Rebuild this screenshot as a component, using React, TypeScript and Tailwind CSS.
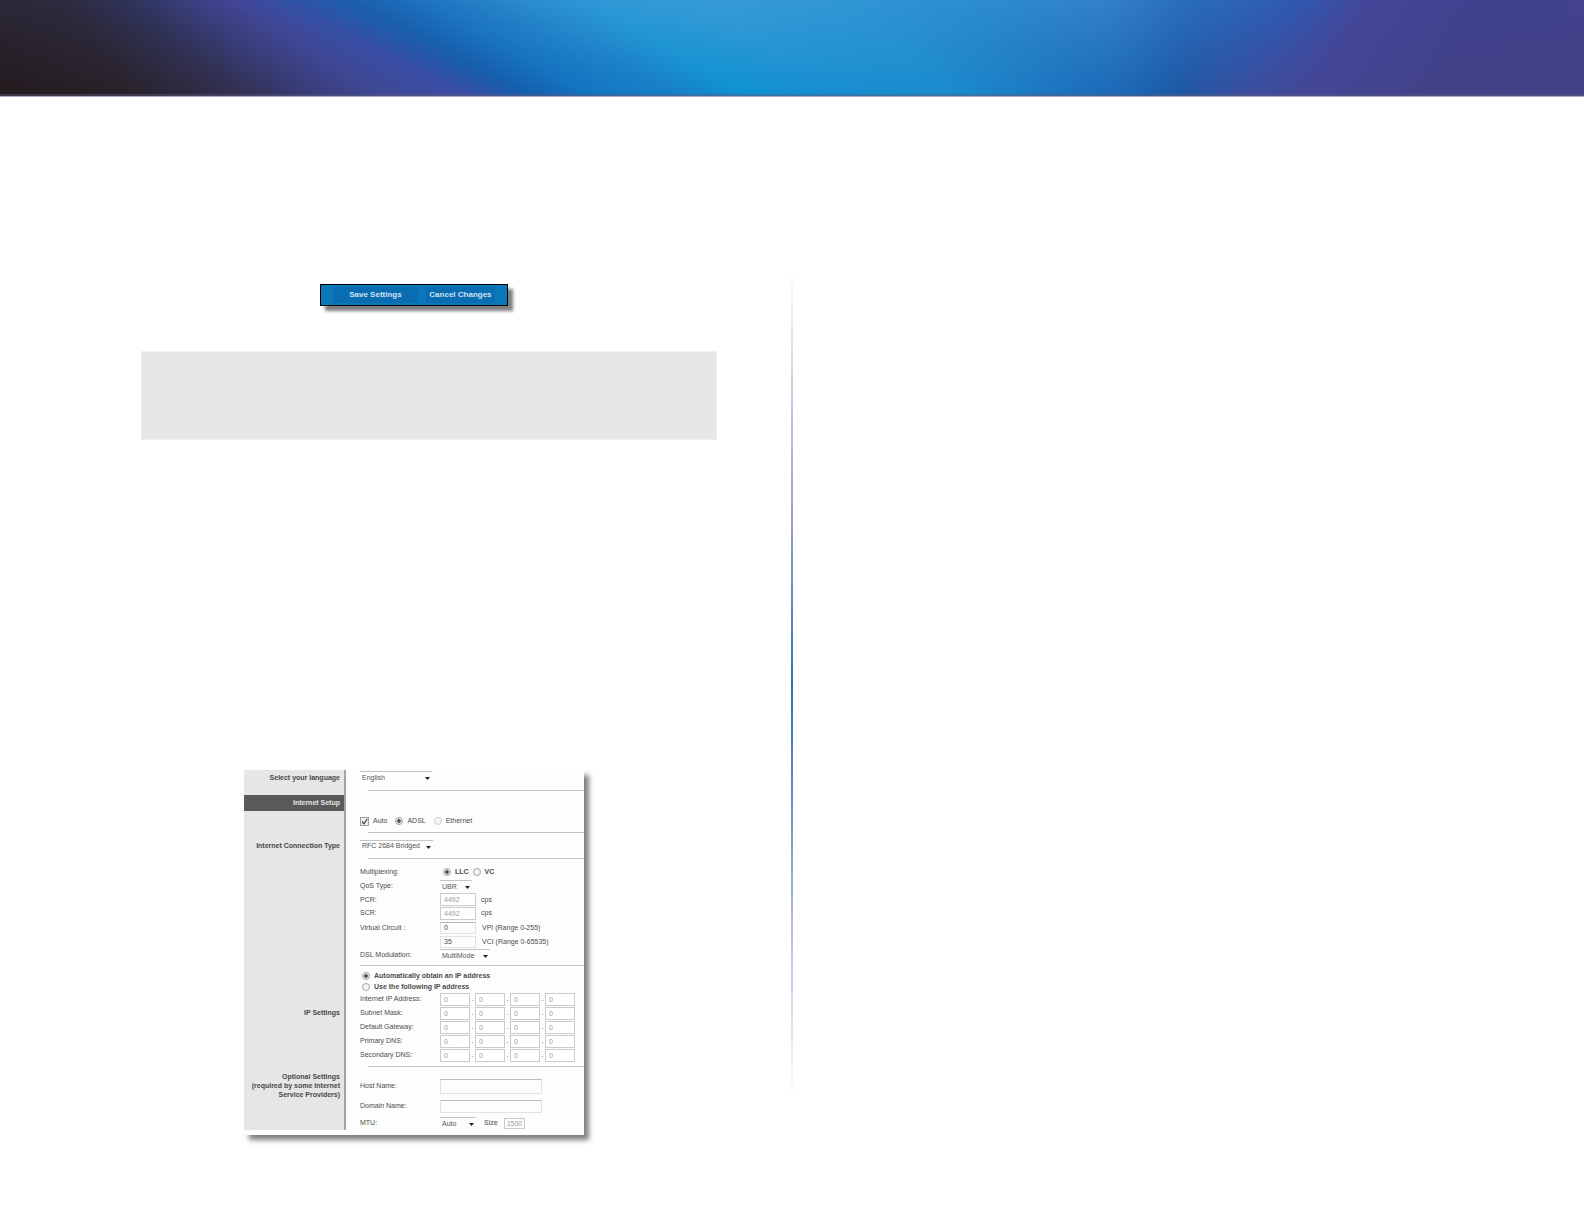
import type { ReactNode } from "react";

// Colour stops of the banner: [x at top, x at bottom, colour at top, colour at bottom]
const bannerStops: [number, number, number[], number[]][] = [
  [0, 0, [43, 40, 56], [36, 26, 30]],
  [60, 130, [46, 42, 62], [40, 34, 42]],
  [130, 230, [46, 52, 90], [50, 46, 76]],
  [185, 310, [58, 62, 124], [56, 60, 118]],
  [235, 380, [66, 70, 150], [62, 72, 148]],
  [290, 460, [48, 82, 166], [60, 76, 164]],
  [350, 530, [26, 94, 172], [22, 94, 172]],
  [420, 590, [30, 114, 190], [18, 116, 192]],
  [520, 680, [42, 138, 204], [22, 128, 200]],
  [590, 750, [46, 152, 214], [14, 146, 208]],
  [700, 830, [54, 156, 214], [22, 142, 208]],
  [850, 960, [48, 150, 212], [24, 138, 204]],
  [980, 1040, [44, 140, 208], [28, 120, 192]],
  [1100, 1120, [50, 130, 200], [26, 104, 182]],
  [1190, 1180, [42, 108, 186], [30, 88, 164]],
  [1300, 1240, [48, 88, 176], [58, 78, 158]],
  [1370, 1310, [68, 70, 152], [68, 70, 150]],
  [1480, 1430, [64, 66, 142], [66, 66, 136]],
  [1584, 1584, [66, 66, 142], [66, 66, 134]],
];

const BANNER_ROWS = 48;
const mix = (a: number, b: number, t: number) => a + (b - a) * t;

function Banner() {
  const rows = Array.from({ length: BANNER_ROWS }, (_, i) => i / (BANNER_ROWS - 1));
  return (
    <header className="border-b border-[#a3a8c8]">
      <svg viewBox="0 0 1584 96" preserveAspectRatio="none" shapeRendering="crispEdges" className="block h-24 w-full" aria-hidden="true">
        <defs>
          {rows.map((t, i) => (
            <linearGradient key={i} id={`band${i}`}>
              {bannerStops.map(([x1, x2, c1, c2], k) => (
                <stop
                  key={k}
                  offset={mix(x1, x2, t) / 1584}
                  stopColor={`rgb(${c1.map((c, n) => Math.round(mix(c, c2[n], t))).join(",")})`}
                />
              ))}
            </linearGradient>
          ))}
        </defs>
        {rows.map((_, i) => (
          <rect key={i} x="0" y={i * 2} width="1584" height="2" fill={`url(#band${i})`} />
        ))}
        <rect x="0" y="94" width="1584" height="2" fill="#5a5a7c" opacity="0.45" />
      </svg>
    </header>
  );
}

type SectionProps = {
  label: ReactNode;
  labelClass?: string;
  className?: string;
  children: ReactNode;
};

function Section({ label, labelClass = "", className = "", children }: SectionProps) {
  return (
    <section className="grid grid-cols-[102px_1fr]">
      <div className={`border-r-2 border-[#a4a4a4] bg-[#e6e6e6] text-right font-bold leading-[9px] text-[#484848] ${labelClass}`}>{label}</div>
      <div className={`pl-[14px] ${className}`}>{children}</div>
    </section>
  );
}

function Rule({ wide = false }: { wide?: boolean }) {
  return <hr className={`border-[#c2c2c4] ${wide ? "" : "ml-2"}`} />;
}

type DropdownProps = { label: string; value: string; width: string; id?: string };

function Dropdown({ label, value, width, id }: DropdownProps) {
  return (
    <span className={`relative inline-block ${width}`}>
      <select
        id={id}
        aria-label={label}
        className="block h-3 w-full appearance-none border-t border-[#c4c4c4] bg-transparent pl-[2px] text-[#555]"
      >
        <option>{value}</option>
      </select>
      <svg viewBox="0 0 5 3" className="pointer-events-none absolute right-[2px] top-[6px] h-[3px] w-[5px]" aria-hidden="true">
        <path d="M0 0h5L2.5 3z" fill="#222" />
      </svg>
    </span>
  );
}

type ChoiceProps = { label: string; name: string; checked?: boolean; faint?: boolean };

function Choice({ label, name, checked, faint }: ChoiceProps) {
  return (
    <label className="flex items-center gap-1">
      <input
        type="radio"
        name={name}
        defaultChecked={checked}
        className={`size-2 shrink-0 appearance-none rounded-full border bg-[radial-gradient(circle,#f4f4f4_60%,#ddd)] checked:bg-[radial-gradient(circle,#505050_35%,#e4e4e4_50%)] ${faint ? "border-[#d0d0d0]" : "border-[#a4a4a4]"}`}
      />
      {label}
    </label>
  );
}

type RowProps = { label: string; id?: string; height?: string; children: ReactNode };

function Row({ label, id, height = "h-[14px]", children }: RowProps) {
  return (
    <div className={`flex items-center ${height}`}>
      <label htmlFor={id} className="w-20 shrink-0">
        {label}
      </label>
      {children}
    </div>
  );
}

const inputClass = "h-[13px] border border-[#cacaca] bg-white px-[3px] text-[#9a9a9a]";

const addresses = ["Internet IP Address:", "Subnet Mask:", "Default Gateway:", "Primary DNS:", "Secondary DNS:"];

function AddressInputs({ label }: { label: string }) {
  return (
    <div className="flex items-center">
      {[0, 1, 2, 3].map((n) => (
        <span key={n} className="flex items-center">
          {n > 0 && <span className="w-[5px] text-center">.</span>}
          <input aria-label={`${label} part ${n + 1}`} defaultValue="0" className={`w-[30px] ${inputClass}`} />
        </span>
      ))}
    </div>
  );
}

function SetupForm() {
  return (
    <form className="w-[340px] bg-[#fdfdfd] pb-[5px] text-[7px] leading-[10px] text-[#4c4c4c] shadow-[5px_5px_5px_rgba(0,0,0,0.5)]">
      <Section label={<label htmlFor="language">Select your language</label>} labelClass="pr-1 pt-[3px]" className="pt-px">
        <Dropdown id="language" label="Language" value="English" width="w-[72px]" />
        <div className="pt-[7px]">
          <Rule />
        </div>
      </Section>

      <Section
        label={<h2 className="bg-[#5a5a5a] py-[3px] pr-1 leading-[10px] text-[#e4e4e4]">Internet Setup</h2>}
        labelClass="pt-1"
      >
        <div className="flex h-[41px] items-end gap-2 pb-[6px]">
          <label className="flex items-center gap-1">
            <span className="relative block size-[9px]">
              <input type="checkbox" defaultChecked className="block size-[9px] appearance-none border border-[#a0a0a0] bg-[#eee]" />
              <svg viewBox="0 0 9 9" className="pointer-events-none absolute inset-0" aria-hidden="true">
                <path d="M2 4.5l2 2.2L7.3 2" fill="none" stroke="#444" strokeWidth="1.2" />
              </svg>
            </span>
            Auto
          </label>
          <Choice label="ADSL" name="port" checked />
          <Choice label="Ethernet" name="port" faint />
        </div>
        <Rule />
      </Section>

      <Section label={<label htmlFor="connection">Internet Connection Type</label>} labelClass="pr-1 pt-[8px]">
        <div className="flex h-[25px] items-center">
          <Dropdown id="connection" label="Internet Connection Type" value="RFC 2684 Bridged" width="w-[73px]" />
        </div>
        <Rule />
      </Section>

      <Section label="" className="pt-[6px]">
        <Row label="Multiplexing:">
          <div className="flex gap-1 pl-[3px] font-bold">
            <Choice label="LLC" name="multiplexing" checked />
            <Choice label="VC" name="multiplexing" />
          </div>
        </Row>
        <Row label="QoS Type:" id="qos">
          <Dropdown id="qos" label="QoS Type" value="UBR" width="w-[32px]" />
        </Row>
        <Row label="PCR:" id="pcr" height="h-[13px]">
          <input id="pcr" defaultValue="4492" className={`w-9 ${inputClass}`} />
          <span className="pl-[5px]">cps</span>
        </Row>
        <Row label="SCR:" id="scr">
          <input id="scr" defaultValue="4492" className={`w-9 ${inputClass}`} />
          <span className="pl-[5px]">cps</span>
        </Row>
        <Row label="Virtual Circuit :" id="vpi" height="h-[15px]">
          <input id="vpi" defaultValue="0" className="h-3 w-9 border border-[#e2e2e2] border-t-[#b4b4b4] px-[3px]" />
          <span className="pl-[6px]">VPI (Range 0-255)</span>
        </Row>
        <Row label="" height="h-[13px]">
          <input aria-label="VCI" defaultValue="35" className="h-3 w-9 border border-[#e2e2e2] px-[3px]" />
          <span className="pl-[6px]">VCI (Range 0-65535)</span>
        </Row>
        <Row label="DSL Modulation:" id="modulation">
          <Dropdown id="modulation" label="DSL Modulation" value="MultiMode" width="w-[50px]" />
        </Row>
        <div className="pt-[3px]">
          <Rule wide />
        </div>
      </Section>

      <Section label="IP Settings" labelClass="pr-1 pt-[42px]" className="pt-[5px]">
        <div className="pl-[2px] font-bold">
          <Choice label="Automatically obtain an IP address" name="address" checked />
          <div className="pt-px">
            <Choice label="Use the following IP address" name="address" />
          </div>
        </div>
        <div>
          {addresses.map((label) => (
            <Row key={label} label={label}>
              <AddressInputs label={label} />
            </Row>
          ))}
        </div>
        <div className="pt-[4px]">
          <Rule />
        </div>
      </Section>

      <Section
        label={
          <>
            Optional Settings
            <br />
            (required by some Internet
            <br />
            Service Providers)
          </>
        }
        labelClass="whitespace-nowrap pr-1 pt-[5px]"
        className="pt-[9px]"
      >
        <Row label="Host Name:" id="host" height="h-5">
          <input id="host" className="h-[15px] w-[102px] border border-[#e2e2e2] border-t-[#bcbcbc]" />
        </Row>
        <Row label="Domain Name:" id="domain" height="h-5">
          <input id="domain" className="h-[13px] w-[102px] border border-[#e2e2e2] border-t-[#bcbcbc]" />
        </Row>
        <Row label="MTU:" id="mtu">
          <Dropdown id="mtu" label="MTU" value="Auto" width="w-[36px]" />
          <label htmlFor="size" className="pl-2 pr-[6px]">
            Size
          </label>
          <input id="size" defaultValue="1500" className="h-[11px] w-[21px] border border-[#cacaca] px-[2px] text-[#9a9a9a]" />
        </Row>
      </Section>
    </form>
  );
}

export default function App() {
  return (
    <div className="min-h-screen bg-white pb-[89px] font-['Liberation_Sans',Arial,sans-serif]">
      <Banner />
      <main className="grid grid-cols-2 pt-[173px]">
        <div className="pl-[141px] pr-[75px] pt-[14px]">
          <div className="ml-[179px] flex h-[22px] w-[188px] items-center gap-2 border border-black bg-[#0a78bb] px-3 text-[8px] font-bold leading-[12px] text-[#cfe3f2] shadow-[5px_5px_3px_rgba(0,0,0,0.5)]">
            <button type="button" className="h-4 w-[86px] bg-[#0a6db1]">
              Save Settings
            </button>
            <button type="button" className="h-4 w-[70px] whitespace-nowrap bg-[#0a6db1]">
              Cancel Changes
            </button>
          </div>
          <div className="mt-[45px] h-[89px] border border-[#f0f0f1] bg-[#e6e6e8]" />
          <div className="ml-[103px] mt-[330px]">
            <SetupForm />
          </div>
        </div>
        <div className="h-[832px] w-[2px] -translate-x-px bg-[linear-gradient(#fff,#c8bcd8_18%,#8f9bca_32%,#2a74ac_50%,#6f8cc4_64%,#b8c0de_80%,#fff)]" />
      </main>
    </div>
  );
}
